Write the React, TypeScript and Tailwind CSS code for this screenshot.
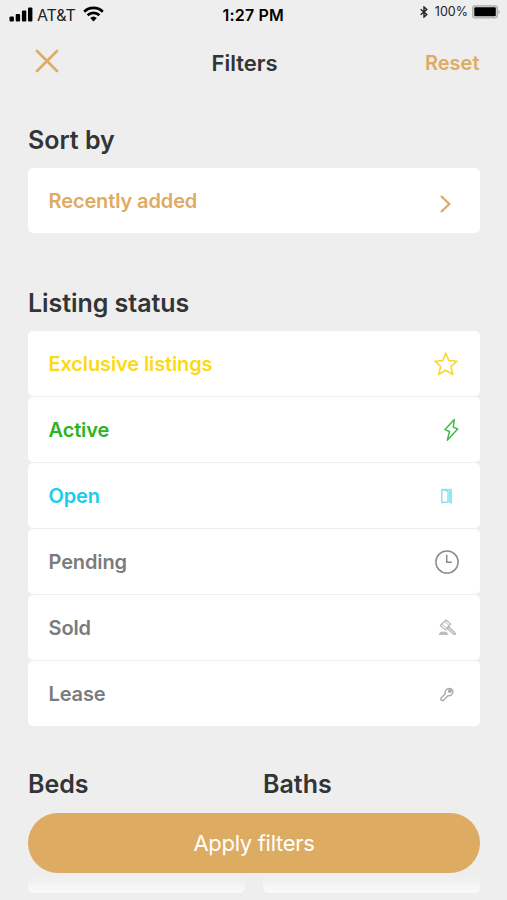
import type { ReactNode } from 'react';

const statuses = [
  { label: 'Exclusive listings', color: 'text-[#fbd914]', icon: <StarIcon /> },
  { label: 'Active', color: 'text-[#2db321]', icon: <BoltIcon /> },
  { label: 'Open', color: 'text-[#20cbe9]', icon: <DoorIcon /> },
  { label: 'Pending', color: 'text-[#7b7b7b]', icon: <ClockIcon /> },
  { label: 'Sold', color: 'text-[#7b7b7b]', icon: <GavelIcon /> },
  { label: 'Lease', color: 'text-[#7b7b7b]', icon: <KeyIcon /> },
];

function StarIcon() {
  return (
    <svg width="26" height="26" viewBox="0 0 26 26" fill="none" stroke="#f9d835" strokeWidth="1.6" strokeLinejoin="round" className="-mr-px">
      <path d="M11.7 2l3.1 7.6 8.3.6-6.3 5.3 2 8-7.1-4.3-7 4.3 2-8L.9 10.2l8-.6z" />
    </svg>
  );
}

function BoltIcon() {
  return (
    <svg width="16" height="24" viewBox="0 0 16 24" fill="none" stroke="#45b94a" strokeWidth="1.5" strokeLinejoin="round">
      <path d="M11.3 1.5L2 11.600l4.500 1.900L4.300 22.300 14.700 11l-4.400-1.900z" />
    </svg>
  );
}

function DoorIcon() {
  return (
    <svg width="24" height="24" viewBox="0 0 24 24" fill="none" stroke="#70dced" strokeWidth="1.2">
      <path d="M6.8 5.500L13 6.800v11.400l-6.200.5z" />
      <path d="M6.8 5.300h9.700" strokeWidth=".8" />
      <path d="M14.200 5.500h2.300v14l-2.300-1.300z" fill="#8ee5f1" stroke="#8ee5f1" strokeWidth=".8" />
    </svg>
  );
}

function ClockIcon() {
  return (
    <svg width="24" height="24" viewBox="0 0 24 24" fill="none" stroke="#8c8c8c" strokeWidth="1.5">
      <circle cx="12" cy="12" r="11.1" />
      <path d="M11.7 4.8v7.5h5.2" />
    </svg>
  );
}

function GavelIcon() {
  return (
    <svg width="24" height="24" viewBox="0 0 24 24" fill="none" stroke="#b4b4b4" strokeWidth="1.1" strokeLinejoin="round">
      <path d="M5.3 9.500L11 4l4.700 4.100-5.300 5.800z" />
      <path d="M6.800 8.100l5.100 4.300M9.500 5.500l4.800 4.200" strokeWidth=".9" />
      <path d="M13.400 10.400l6.300 6 .9 1.800-1.900.2-6.700-6.100z" fill="#dedede" />
      <path d="M5.800 16.200h5.500l1 1.200H4.800z" fill="#c4c4c4" strokeWidth=".8" />
      <path d="M3.800 18.300h9.500" />
    </svg>
  );
}

function KeyIcon() {
  return (
    <svg width="24" height="24" viewBox="0 0 24 24" fill="none" stroke="#acacac" strokeWidth="1.4" strokeLinejoin="round">
      <path d="M10 12L6 16v2.300l2.300.2 1.500-1.700 1.500-1.300 1.600-1.900c1.600.4 3.500-.3 4.400-1.800 1.200-2 .6-4.100-.9-4.800-2-.8-4.400-.3-5.500 1.200-.9 1.300-1.200 2.500-.9 3.800z" />
      <circle cx="14.900" cy="9" r="1.300" fill="#999" />
    </svg>
  );
}

function Row({ label, color, children }: { label: string; color: string; children: ReactNode }) {
  return (
    <div className="flex h-[65px] items-center justify-between rounded-[5px] bg-white pr-[21px] pl-[20.5px]">
      <span className={`text-[20px] font-semibold tracking-[-0.12px] ${color}`}>{label}</span>
      {children}
    </div>
  );
}

function StatusBar() {
  return (
    <div className="relative flex h-[30px] items-center justify-between pr-[7px] pl-[9px] text-black">
      <div className="flex items-center">
        <svg width="24" height="15" viewBox="0 0 24 15" className="-mt-[2px]">
          <rect x=".5" y="9.5" width="4.4" height="5" rx="1" />
          <rect x="6.7" y="7" width="4.4" height="7.5" rx="1" />
          <rect x="12.9" y="3.5" width="4.4" height="11" rx="1" />
          <rect x="19" y=".5" width="4.4" height="14" rx="1" />
        </svg>
        <span className="ml-[4px] text-[16px] tracking-[-0.1px] text-[#222]">AT&amp;T</span>
        <svg width="21" height="16" viewBox="0 0 21 16" fill="none" stroke="#000" strokeWidth="2.7" className="-mt-[2px] ml-[7px]">
          <path d="M1.2 5.7a13.300 13.300 0 0 1 18.600 0" />
          <path d="M4.6 9.300a8.500 8.500 0 0 1 11.800 0" />
          <path d="M7.2 12a4.800 4.800 0 0 1 6.600 0L10.500 15.400z" fill="#000" stroke="none" />
        </svg>
      </div>
      <span className="absolute left-[222.5px] text-[16px] font-semibold tracking-[0.2px]">1:27 PM</span>
      <div className="flex items-center pb-[6px]">
        <svg width="8" height="12" viewBox="0 0 8 12" fill="none" stroke="#222" strokeWidth="1.4">
          <path d="M.6 3.200l6.200 5.300L4 11V1l2.800 2.500L.6 8.800" />
        </svg>
        <span className="ml-[7px] text-[12.5px] text-[#222]">100%</span>
        <svg width="28" height="14" viewBox="0 0 28 14" className="ml-[4px]">
          <rect x=".8" y=".8" width="24.500" height="12" rx="2" fill="#ddd" stroke="#aaa" strokeWidth="1.3" />
          <rect x="2.300" y="2.300" width="21.500" height="9" rx="1" />
          <path d="M26.500 5c1.500.7 1.500 3 0 3.700z" fill="#999" />
        </svg>
      </div>
    </div>
  );
}

export default function App() {
  return (
    <div className="h-[900px] w-[507px] overflow-hidden bg-[#eeeeee] font-['Inter',sans-serif] text-[#333435]">
      <StatusBar />

      <header className="relative flex h-[66px] items-center justify-between pr-[27.5px] pl-[35px] text-[#deab62]">
        <svg width="24" height="24" viewBox="0 0 24 24" fill="none" stroke="currentColor" strokeWidth="2.6" strokeLinecap="round" className="-mt-1">
          <path d="M2 2l20 20M22 2L2 22" />
        </svg>
        <h1 className="absolute left-[211.5px] text-[22px] font-semibold text-[#333435]">Filters</h1>
        <button className="text-[20px] font-semibold">Reset</button>
      </header>

      <main className="pr-[27px] pl-[28px]">
        <h2 className="mt-[26px] h-[36px] text-[25px] leading-[36px] font-semibold">Sort by</h2>
        <div className="mt-[10px]">
          <Row label="Recently added" color="text-[#deab62]">
            <svg width="14" height="20" viewBox="0 0 14 20" fill="none" stroke="#deab62" strokeWidth="2.3" className="mt-[6px] mr-[6px]">
              <path d="M2 2l8.300 8L2 18" />
            </svg>
          </Row>
        </div>

        <h2 className="mt-[52px] h-[36px] text-[25px] leading-[36px] font-semibold tracking-[-0.05px]">Listing status</h2>
        <div className="mt-[10px] flex flex-col gap-px">
          {statuses.map((item) => (
            <Row key={item.label} label={item.label} color={item.color}>
              {item.icon}
            </Row>
          ))}
        </div>

        <div className="mt-[40px] grid grid-cols-2 gap-x-[18px] text-[25px] leading-[36px] font-semibold">
          <h2>Beds</h2>
          <h2>Baths</h2>
        </div>

        <button className="mt-[11px] block h-[60px] w-full rounded-full bg-[#deab62] text-[22px] tracking-[-0.3px] text-white">Apply filters</button>

        {/* value cards fading out under the button */}
        <div className="mt-[5px] grid grid-cols-2 gap-x-[18px]">
          <div className="h-[15px] rounded-b-[5px] bg-gradient-to-b from-[#efefef] to-[#fafafa]" />
          <div className="h-[15px] rounded-b-[5px] bg-gradient-to-b from-[#efefef] to-[#fafafa]" />
        </div>
      </main>
    </div>
  );
}
